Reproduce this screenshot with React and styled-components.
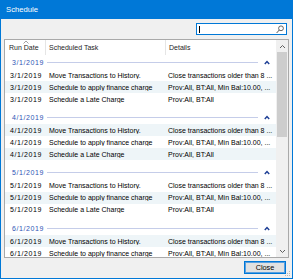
import React from "react";
import styled, { createGlobalStyle } from "styled-components";

const GlobalStyle = createGlobalStyle`
  body {
    margin: 0;
    font-family: "Liberation Sans", Arial, sans-serif;
  }
`;

const Window = styled.div`
  position: relative;
  width: 293px;
  height: 279px;
  box-sizing: border-box;
  background: #0078d7;
  padding: 0 1px 1px;
  display: flex;
  flex-direction: column;
`;

const TitleBar = styled.div`
  height: 19px;
  display: flex;
  align-items: center;
  padding-left: 5px;
  color: #fff;
  font-size: 7.7px;
`;

const Body = styled.div`
  flex: 1;
  background: #f0f0f0;
  display: flex;
  flex-direction: column;
  padding: 4px 3px;
  min-height: 0;
`;

const SearchBox = styled.div`
  align-self: flex-end;
  width: 91px;
  height: 12px;
  box-sizing: border-box;
  margin-right: 2px;
  border: 1px solid #0078d7;
  background: #fff;
  display: flex;
  align-items: center;
  justify-content: space-between;
  padding: 0 2px 0 2px;
`;

const Caret = styled.span`
  width: 1px;
  height: 7px;
  background: #000;
`;

const ListFrame = styled.div`
  margin-top: 4px;
  height: 219px;
  box-sizing: border-box;
  border: 1px solid #a9a9a9;
  background: #fff;
  display: flex;
`;

const ListMain = styled.div`
  flex: 1;
  overflow: hidden;
  display: flex;
  flex-direction: column;
  font-size: 7px;
  color: #000;
`;

const HeaderRow = styled.div`
  position: relative;
  height: 15px;
  flex-shrink: 0;
  display: flex;
`;

const HeaderCell = styled.div`
  width: ${(p) => p.$width}px;
  flex-shrink: 0;
  box-sizing: border-box;
  padding-left: ${(p) => p.$pad}px;
  line-height: 15px;
  white-space: nowrap;
  color: #1e1e1e;
  border-right: ${(p) => (p.$sep ? "1px solid #e5e5e5" : "none")};
`;

const SortArrow = styled.svg`
  position: absolute;
  left: 18px;
  top: 0px;
`;

const Group = styled.div`
  flex-shrink: 0;
  margin-bottom: 5.4px;
`;

const GroupHeader = styled.div`
  height: 14px;
  display: flex;
  align-items: center;
`;

const GroupLabel = styled.div`
  width: 39px;
  text-align: right;
  color: #2f54b5;
  letter-spacing: 0.6px;
  white-space: nowrap;
`;

const GroupLine = styled.div`
  flex: 1;
  height: 1px;
  margin-left: 3px;
  background: #c5cde9;
`;

const GroupToggle = styled.svg`
  margin: 0 6px 0 6px;
`;

const Row = styled.div`
  height: 12px;
  display: flex;
  align-items: center;
  background: ${(p) => (p.$shaded ? "#eef5f8" : "transparent")};
`;

const DateCell = styled.div`
  width: 41px;
  flex-shrink: 0;
  box-sizing: border-box;
  padding-right: 4px;
  text-align: right;
  letter-spacing: 0.6px;
  white-space: nowrap;
`;

const Cell = styled.div`
  width: ${(p) => (p.$width ? `${p.$width}px` : "auto")};
  flex: ${(p) => (p.$width ? "0 0 auto" : "1")};
  box-sizing: border-box;
  padding-left: ${(p) => p.$pad}px;
  white-space: nowrap;
  overflow: hidden;
`;

const Scrollbar = styled.div`
  width: 12px;
  flex-shrink: 0;
  background: #f0f0f0;
  display: flex;
  flex-direction: column;
`;

const ScrollButton = styled.div`
  height: 12px;
  display: flex;
  align-items: center;
  justify-content: center;
`;

const Thumb = styled.div`
  height: 85px;
  margin: 0 1px;
  background: #cdcdcd;
`;

const Track = styled.div`
  flex: 1;
`;

const Footer = styled.div`
  margin-top: 3px;
  display: flex;
  justify-content: flex-end;
`;

const CloseButton = styled.button`
  width: 42px;
  height: 13px;
  margin-right: 3px;
  padding: 0;
  box-sizing: border-box;
  border: 1px solid #0078d7;
  box-shadow: inset 0 0 0 1px #5aa0e0;
  background: #e1e1e1;
  font-family: "Liberation Sans", Arial, sans-serif;
  font-size: 7.3px;
  color: #000;
`;

const Grip = styled.svg`
  position: absolute;
  right: 2px;
  bottom: 2px;
`;

const tasks = [
  ["Move Transactions to History.", "Close transactions older than 8 ..."],
  ["Schedule to apply finance charge", "Prov:All, BT:All, Min Bal:10.00, ..."],
  ["Schedule a Late Charge", "Prov:All, BT:All"],
];

const dates = ["3/1/2019", "4/1/2019", "5/1/2019", "6/1/2019"];

const Chevron = ({ up, color }) => (
  <svg width="7" height="5" viewBox="0 0 7 5">
    <polyline
      points={up ? "1,4 3.5,1.5 6,4" : "1,1 3.5,3.5 6,1"}
      fill="none"
      stroke={color}
      strokeWidth="1"
    />
  </svg>
);

const App = () => {
  let index = 0;
  return (
    <>
      <GlobalStyle />
      <Window>
        <TitleBar>Schedule</TitleBar>
        <Body>
          <SearchBox>
            <Caret />
            <svg width="8" height="9" viewBox="0 0 8 9">
              <circle cx="5" cy="3.3" r="2.4" fill="none" stroke="#555" strokeWidth="0.9" />
              <line x1="3.3" y1="5" x2="0.6" y2="8" stroke="#555" strokeWidth="1" />
            </svg>
          </SearchBox>
          <ListFrame>
            <ListMain>
              <HeaderRow>
                <HeaderCell $width={41} $pad={4} $sep>Run Date</HeaderCell>
                <HeaderCell $width={120} $pad={3} $sep>Scheduled Task</HeaderCell>
                <HeaderCell $width={110} $pad={3}>Details</HeaderCell>
                <SortArrow width="6" height="4" viewBox="0 0 6 4">
                  <polyline points="0.5,3.5 3,1 5.5,3.5" fill="none" stroke="#8a8a8a" strokeWidth="0.8" />
                </SortArrow>
              </HeaderRow>
              {dates.map((d) => (
                <Group key={d}>
                  <GroupHeader>
                    <GroupLabel>{d}</GroupLabel>
                    <GroupLine />
                    <GroupToggle width="6" height="5" viewBox="0 0 6 5">
                      <polyline points="0.8,4 3,1.6 5.2,4" fill="none" stroke="#1e3f96" strokeWidth="1.5" />
                    </GroupToggle>
                  </GroupHeader>
                  {tasks.map(([task, detail]) => {
                    const shaded = index % 2 === 1;
                    index += 1;
                    return (
                      <Row key={task} $shaded={shaded}>
                        <DateCell>{d}</DateCell>
                        <Cell $width={120} $pad={3}>{task}</Cell>
                        <Cell $pad={2}>{detail}</Cell>
                      </Row>
                    );
                  })}
                </Group>
              ))}
            </ListMain>
            <Scrollbar>
              <ScrollButton>
                <Chevron up color="#606060" />
              </ScrollButton>
              <Thumb />
              <Track />
              <ScrollButton>
                <Chevron color="#606060" />
              </ScrollButton>
            </Scrollbar>
          </ListFrame>
          <Footer>
            <CloseButton>Close</CloseButton>
          </Footer>
        </Body>
        <Grip width="7" height="7" viewBox="0 0 7 7">
          <rect x="5" y="1" width="1" height="1" fill="#b5b5b5" />
          <rect x="3" y="3" width="1" height="1" fill="#b5b5b5" />
          <rect x="5" y="3" width="1" height="1" fill="#b5b5b5" />
          <rect x="1" y="5" width="1" height="1" fill="#b5b5b5" />
          <rect x="3" y="5" width="1" height="1" fill="#b5b5b5" />
          <rect x="5" y="5" width="1" height="1" fill="#b5b5b5" />
        </Grip>
      </Window>
    </>
  );
};

export default App;
